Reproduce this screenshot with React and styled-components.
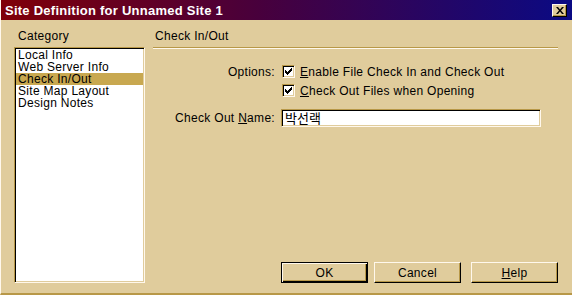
import styled, { createGlobalStyle } from 'styled-components';

const FACE = '#e0cc9c';
const SHADOW = '#b89848';
const LIGHT = '#fff8ec';

const GlobalStyle = createGlobalStyle`
	html, body {
		margin: 0;
		padding: 0;
		background: ${FACE};
	}
	body {
		font-family: 'Liberation Sans', Arial, sans-serif;
		font-size: 12px;
		letter-spacing: 0.3px;
		color: #000;
	}
`;

const Window = styled.div`
	width: 572px;
	height: 295px;
	box-sizing: border-box;
	border-left: 1px solid ${LIGHT};
	border-bottom: 2px solid ${SHADOW};
	background: ${FACE};
	display: flex;
	flex-direction: column;
	overflow: hidden;
`;

const TitleBar = styled.div`
	height: 20px;
	display: flex;
	align-items: center;
	justify-content: space-between;
	padding: 0 5px 0 4px;
	background: linear-gradient(to right, #800008, #48003c 45%, #0a0a84);
	color: #fff;
	font-weight: bold;
	font-size: 13px;
	letter-spacing: 0.25px;
`;

const CloseButton = styled.div`
	width: 15px;
	height: 13px;
	box-sizing: border-box;
	background: ${FACE};
	border-top: 1px solid ${LIGHT};
	border-left: 1px solid ${LIGHT};
	border-right: 1px solid #000;
	border-bottom: 1px solid #000;
	box-shadow: inset -1px -1px 0 ${SHADOW};
	display: flex;
	align-items: center;
	justify-content: center;
`;

const Body = styled.div`
	flex: 1;
	display: flex;
	gap: 8px;
	padding: 9px 0 10px 13px;
`;

const LeftPanel = styled.div`
	width: 131px;
	display: flex;
	flex-direction: column;
`;

const RightPanel = styled.div`
	width: 405px;
	display: flex;
	flex-direction: column;
`;

const Heading = styled.div`
	line-height: 14px;
	padding-left: ${(p) => p.$indent}px;
	margin-bottom: 4px;
`;

const HeadingRule = styled.div`
	line-height: 14px;
	padding-left: 2px;
	padding-bottom: 4px;
	border-bottom: 1px solid ${SHADOW};
	box-shadow: 0 1px 0 ${LIGHT};
`;

const ListBox = styled.div`
	flex: 1;
	background: #fff;
	border-top: 1px solid ${SHADOW};
	border-left: 1px solid ${SHADOW};
	border-right: 1px solid ${LIGHT};
	border-bottom: 1px solid ${LIGHT};
	box-shadow: inset 1px 1px 0 #000, inset -1px -1px 0 ${FACE};
	padding: 1px 1px;
`;

const ListItem = styled.div`
	height: 12px;
	line-height: 12px;
	padding-left: 2px;
	background: ${(p) => (p.$selected ? '#c8a850' : 'transparent')};
	white-space: nowrap;
`;

const Form = styled.div`
	display: grid;
	grid-template-columns: 122px 260px;
	column-gap: 6px;
	grid-auto-rows: 19px;
	align-items: center;
	margin-top: 14px;
`;

const Label = styled.div`
	text-align: right;
	white-space: nowrap;
`;

const CheckRow = styled.label`
	display: flex;
	align-items: center;
	gap: 5px;
	padding-left: 1px;
	white-space: nowrap;
`;

const Box = styled.span`
	width: 13px;
	height: 13px;
	box-sizing: border-box;
	background: #fff;
	border-top: 1px solid ${SHADOW};
	border-left: 1px solid ${SHADOW};
	border-right: 1px solid ${LIGHT};
	border-bottom: 1px solid ${LIGHT};
	box-shadow: inset 1px 1px 0 #000, inset -1px -1px 0 ${FACE};
	display: flex;
	align-items: center;
	justify-content: center;
`;

const NameRow = styled.div`
	display: contents;
`;

const TextField = styled.div`
	height: 18px;
	box-sizing: border-box;
	margin-top: 16px;
	background: #fff;
	border-top: 1px solid ${SHADOW};
	border-left: 1px solid ${SHADOW};
	border-right: 1px solid ${LIGHT};
	border-bottom: 1px solid ${LIGHT};
	box-shadow: inset 1px 1px 0 #000, inset -1px -1px 0 ${FACE};
	padding: 0 3px;
	line-height: 16px;
	font-family: 'Noto Sans CJK KR', 'Liberation Sans', sans-serif;
	font-size: 13px;
	letter-spacing: 0;
`;

const NameLabel = styled(Label)`
	margin-top: 16px;
`;

const Buttons = styled.div`
	margin-top: auto;
	display: flex;
	padding-left: 128px;
`;

const Button = styled.div`
	width: 88px;
	height: 21px;
	box-sizing: border-box;
	margin-right: ${(p) => p.$after || 0}px;
	background: ${FACE};
	display: flex;
	align-items: center;
	justify-content: center;
	border-top: 1px solid ${(p) => (p.$default ? '#000' : LIGHT)};
	border-left: 1px solid ${(p) => (p.$default ? '#000' : LIGHT)};
	border-right: 1px solid #000;
	border-bottom: 1px solid #000;
	box-shadow: ${(p) =>
		p.$default
			? `inset 1px 1px 0 ${LIGHT}, inset -1px -1px 0 #000, inset -2px -2px 0 ${SHADOW}`
			: `inset -1px -1px 0 ${SHADOW}`};
`;

const Key = styled.span`
	text-decoration: underline;
	text-underline-offset: 1px;
`;

const Check = () => (
	<svg width="7" height="7" viewBox="0 0 7 7">
		<path d="M0 2h1v1h1v1h1V3h1V2h1V1h1V0h1v3H6v1H5v1H4v1H3v1H2V6H1V5H0z" fill="#000" />
	</svg>
);

const categories = ['Local Info', 'Web Server Info', 'Check In/Out', 'Site Map Layout', 'Design Notes'];

export default function App() {
	return (
		<>
			<GlobalStyle />
			<Window>
				<TitleBar>
					<span>Site Definition for Unnamed Site 1</span>
					<CloseButton>
						<svg width="8" height="7" viewBox="0 0 8 7">
							<path d="M0 0h2l2 2.5L6 0h2L5 3.5 8 7H6L4 4.5 2 7H0l3-3.5z" fill="#000" />
						</svg>
					</CloseButton>
				</TitleBar>
				<Body>
					<LeftPanel>
						<Heading $indent={4}>Category</Heading>
						<ListBox>
							{categories.map((c) => (
								<ListItem key={c} $selected={c === 'Check In/Out'}>
									{c}
								</ListItem>
							))}
						</ListBox>
					</LeftPanel>
					<RightPanel>
						<HeadingRule>Check In/Out</HeadingRule>
						<Form>
							<Label>Options:</Label>
							<CheckRow>
								<Box>
									<Check />
								</Box>
								<span>
									<Key>E</Key>nable File Check In and Check Out
								</span>
							</CheckRow>
							<span />
							<CheckRow>
								<Box>
									<Check />
								</Box>
								<span>
									<Key>C</Key>heck Out Files when Opening
								</span>
							</CheckRow>
							<NameRow>
								<NameLabel>
									Check Out <Key>N</Key>ame:
								</NameLabel>
								<TextField>박선랙</TextField>
							</NameRow>
						</Form>
						<Buttons>
							<Button $default $after={6}>
								OK
							</Button>
							<Button $after={10}>Cancel</Button>
							<Button>
								<Key>H</Key>elp
							</Button>
						</Buttons>
					</RightPanel>
				</Body>
			</Window>
		</>
	);
}
